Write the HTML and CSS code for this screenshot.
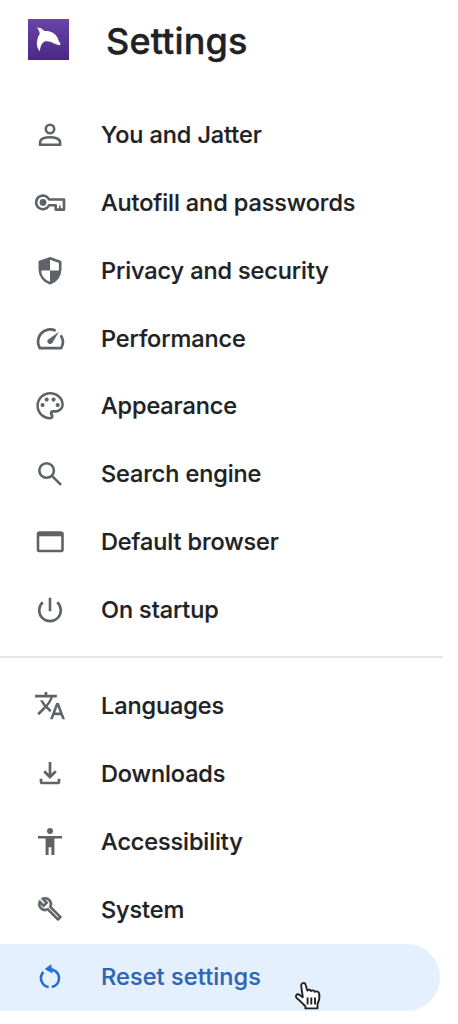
FILE: index.html
```
<!DOCTYPE html>
<html lang="en">
<head>
<meta charset="utf-8">
<title>Settings</title>
<link rel="stylesheet" href="styles.css">
</head>
<body>
<header class="header">
  <svg class="logo" viewBox="0 0 41 41">
    <defs><linearGradient id="purple" x1="0" y1="0" x2="0" y2="1"><stop offset="0" stop-color="#6845a6"/><stop offset="1" stop-color="#492987"/></linearGradient></defs>
    <rect width="41" height="41" fill="url(#purple)"/>
    <path fill="#fff" d="M8.6 8.5C11.5 8.5 14.7 9.6 16.3 12C21.8 11.3 27 13.8 29.5 18.5C30.2 20.3 30.3 21.7 32.2 24.2C33 25.5 31.8 26.6 30.3 26.1L26.5 24.7C23.5 22.7 19.5 21.6 16.2 22.7C13.4 24.2 12.4 27.5 11.8 32.3C9.1 29.7 8.2 25.3 9.2 21.3C9.8 18.7 10.6 16.8 11.7 15.1C11.6 12.3 10.5 10.1 8.6 8.5Z"/>
  </svg>
  <h1 class="title">Settings</h1>
</header>
<nav class="menu">
  <a class="item"><svg class="icon" viewBox="0 0 40 40"><g class="line"><circle cx="20" cy="14" r="4.2"/><path d="M10.1 29.7V27.4C10.1 23.4 16 22.2 20 22.2S30.1 23.4 30.1 27.4V29.7Z"/></g></svg><span class="label">You and Jatter</span></a>
  <a class="item"><svg class="icon" viewBox="0 0 40 40"><path class="line" stroke-linejoin="round" d="M19.1 16.5A6.8 6.8 0 1 0 19.1 22.3H25.7V26.6H34V16.5Z"/><path class="line slit" d="M29.8 22.5V26"/><circle class="solid" cx="13" cy="19.4" r="3.4"/></svg><span class="label">Autofill and passwords</span></a>
  <a class="item"><svg class="icon" viewBox="0 0 40 40"><path class="line" d="M20 7.3L30.2 11V18.3C30.2 25 26.2 30.3 20 32.3C13.8 30.3 9.8 25 9.8 18.3V11Z"/><path class="solid" d="M20 7V19.5H10V11ZM20 19.5H30.5C30 25.5 26 30.5 20 32.5Z"/></svg><span class="label">Privacy and security</span></a>
  <a class="item"><svg class="icon" viewBox="0 0 40 40"><path class="line thick" stroke-linejoin="round" d="M25.6 11.7A12.2 12.2 0 0 0 9.9 29.2H31.1A12.2 12.2 0 0 0 30.7 16.3"/><path class="solid" d="M29 12.8L22.3 24.1C20.1 26.8 15.9 23.5 17.8 20.7Z"/></svg><span class="label">Performance</span></a>
  <a class="item"><svg class="icon" viewBox="0 0 40 40"><g class="solid" transform="translate(3.6 3.3) scale(1.375)"><path d="M12 22C6.49 22 2 17.51 2 12S6.49 2 12 2s10 4.04 10 9c0 3.31-2.69 6-6 6h-1.77c-.28 0-.5.22-.5.5 0 .12.05.23.13.33.41.47.64 1.06.64 1.67A2.5 2.5 0 0 1 12 22zm0-18.2c-4.41 0-8.2 3.79-8.2 8.2s3.79 8.2 8.2 8.2c.28 0 .5-.32.5-.6a.54.54 0 0 0-.14-.35c-.41-.46-.63-1.05-.63-1.65a2.5 2.5 0 0 1 2.5-2.5H16c2.21 0 4.2-1.79 4.2-4 0-3.86-3.79-7.3-8.2-7.3z"/><circle cx="6.5" cy="11.5" r="1.5"/><circle cx="9.5" cy="7.5" r="1.5"/><circle cx="14.5" cy="7.5" r="1.5"/><circle cx="17.5" cy="11.5" r="1.5"/></g></svg><span class="label">Appearance</span></a>
  <a class="item"><svg class="icon" viewBox="0 0 40 40"><g class="line"><circle cx="16.6" cy="16.5" r="7.3"/><path d="M21.7 21.6L31 30.9"/></g></svg><span class="label">Search engine</span></a>
  <a class="item"><svg class="icon" viewBox="0 0 40 40"><rect class="line" x="8" y="10.5" width="24.5" height="18.5" rx="1.6"/><path class="solid" d="M8 10.5H32.5V14.3H8Z"/></svg><span class="label">Default browser</span></a>
  <a class="item"><svg class="icon" viewBox="0 0 40 40"><path class="line" d="M20 7.8V21.2M12.8 12.3A10.8 10.8 0 1 0 27.2 12.3"/></svg><span class="label">On startup</span></a>
  <hr class="divider">
  <a class="item"><svg class="icon" viewBox="0 0 40 40"><path class="solid" transform="translate(3.7 3.3) scale(1.36)" d="M12.87 15.07l-2.54-2.51.03-.03A17.52 17.52 0 0 0 14.07 6H17V4h-7V2H8v2H1v2h11.17C11.5 7.92 10.44 9.75 9 11.35 8.07 10.32 7.3 9.19 6.69 8h-2c.73 1.63 1.73 3.17 2.98 4.56l-5.09 5.02L4 19l5-5 3.11 3.11.76-2.04zM18.5 10h-2L12 22h2l1.12-3h4.75L21 22h2l-4.5-12zm-2.62 7l1.62-4.33L19.12 17h-3.24z"/></svg><span class="label">Languages</span></a>
  <a class="item"><svg class="icon" viewBox="0 0 40 40"><path class="line thick" d="M20 8V22.5M14.2 17.2L20 23L25.8 17.2M11 24.8V27.5Q11 29 12.5 29H27.5Q29 29 29 27.5V24.8"/></svg><span class="label">Downloads</span></a>
  <a class="item"><svg class="icon" viewBox="0 0 40 40"><circle class="solid" cx="20" cy="9" r="3"/><path class="solid" d="M8 13.9H32V16.6H24.4V33H21.4V25.3H18.6V33H15.6V16.6H8Z"/></svg><span class="label">Accessibility</span></a>
  <a class="item"><svg class="icon" viewBox="0 0 40 40"><path class="solid outlined" transform="translate(7.2 6.2) scale(1.06)" d="M22.61 18.99l-9.08-9.08c.93-2.34.45-5.1-1.44-7C9.79.61 6.21.4 3.66 2.26L7.5 6.11 6.08 7.52 2.25 3.69C.39 6.23.6 9.82 2.9 12.11c1.86 1.86 4.57 2.35 6.89 1.48l9.11 9.11c.39.39 1.02.39 1.41 0l2.3-2.3c.4-.38.4-1.01 0-1.41zm-3 1.6l-9.46-9.46c-.61.45-1.29.72-2 .82-1.36.2-2.79-.21-3.83-1.25C3.37 9.76 2.93 8.5 3 7.26l3.09 3.09 4.24-4.24-3.09-3.09c1.24-.07 2.49.37 3.44 1.31 1.08 1.08 1.49 2.57 1.24 3.96-.12.71-.42 1.37-.88 1.96l9.45 9.45-.88.89z"/></svg><span class="label">System</span></a>
  <a class="item active"><svg class="icon" viewBox="0 0 40 40"><path class="line" d="M13.4 15A9 9 0 0 0 18.6 30M17 12.6C24 11.2 29 15.7 29 21.2C29 25.6 26 29.1 21.8 30"/><path class="solid" d="M14.7 12.1L21.2 7.2L22.6 16.6Z"/></svg><span class="label">Reset settings</span>
    <svg class="pointer" viewBox="0 0 28 30"><path d="M8.2 2.5C9.9 1.1 11.3 2.3 11.7 4L13.3 9.5C14.5 8.3 16.4 8.5 17 10C18.5 8.9 20.2 9.2 20.8 10.8C22.5 9.8 24.8 10.7 25.2 12.8C26 17 24.8 20.5 23.5 23V27.4H11.4V25.3C8.6 22.8 6.3 19.6 2.6 16.9C.8 15.2 2.7 12.7 4.9 13.5L8.8 16.2L7.2 5.2C7 4.1 7.2 3.2 8.2 2.5Z"/><path d="M13.6 16.5V23.5M17.3 16.5V23.5M21 16.5V23.5"/></svg>
  </a>
</nav>
</body>
</html>
```
FILE: styles.css
```
body {
  margin: 0;
  width: 458px;
  height: 1024px;
  overflow: hidden;
  background: #fff;
  color: #202124;
  font-family: Inter, "Liberation Sans", sans-serif;
}
.header {
  display: flex;
  align-items: flex-start;
  gap: 37px;
  height: 82px;
  padding: 19px 0 0 28px;
  box-sizing: border-box;
}
.logo {
  width: 41px;
  height: 41px;
}
.title {
  margin: 0;
  font-size: 36px;
  line-height: 44px;
  font-weight: 500;
  letter-spacing: 0.15px;
  -webkit-text-stroke: 0.4px currentColor;
}
.menu {
  padding-top: 19.4px;
}
.item {
  display: flex;
  align-items: center;
  gap: 31px;
  width: 440px;
  height: 67.8px;
  padding-left: 30px;
  box-sizing: border-box;
  position: relative;
}
.icon {
  width: 40px;
  height: 40px;
  flex: none;
  color: #5f6368;
}
.line {
  fill: none;
  stroke: currentColor;
  stroke-width: 2.6;
}
.thick {
  stroke-width: 2.7;
}
.slit {
  stroke-width: 1.6;
}
.solid {
  fill: currentColor;
}
.outlined {
  stroke: currentColor;
  stroke-width: 0.6;
}
.label {
  font-size: 23.5px;
  font-weight: 500;
  line-height: 32px;
  letter-spacing: -0.1px;
  white-space: nowrap;
  -webkit-text-stroke: 0.2px currentColor;
}
.divider {
  width: 443px;
  height: 2px;
  margin: 12.6px 0 14px;
  border: 0;
  background: #e5e5e6;
}
.active {
  border-radius: 0 34px 34px 0;
  background: #e5f0fe;
  color: #2c66b5;
}
.active .label {
  letter-spacing: 0.1px;
}
.active .icon {
  color: #246fd0;
}
.pointer {
  position: absolute;
  left: 294px;
  top: 37px;
  width: 28px;
  height: 30px;
  fill: #fff;
  stroke: #222;
  stroke-width: 1.9;
  stroke-linejoin: round;
}
```
